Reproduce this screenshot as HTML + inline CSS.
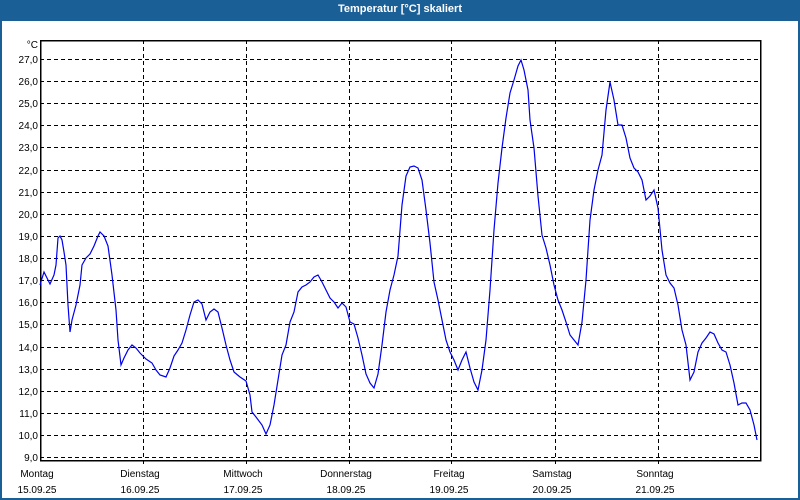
<!DOCTYPE html>
<html><head><meta charset="utf-8"><style>
html,body{margin:0;padding:0;}
body{width:800px;height:500px;overflow:hidden;background:#1b5f97;position:relative;font-family:"Liberation Sans",sans-serif;}
.title{position:absolute;left:0;top:0;width:800px;height:21px;line-height:19px;text-align:center;color:#fff;font-weight:bold;font-size:11px;}
.win{position:absolute;left:2px;top:21px;width:796px;height:477px;background:#fff;}
svg{position:absolute;left:0;top:0;}
text{font-family:"Liberation Sans",sans-serif;font-size:10px;fill:#000;}
</style></head><body>
<div class="title">Temperatur [°C] skaliert</div>
<div class="win"></div>
<svg width="800" height="500">
<g stroke="#000" stroke-width="1" stroke-dasharray="4,3" shape-rendering="crispEdges">
<line x1="40" y1="59.5" x2="760" y2="59.5"/>
<line x1="40" y1="81.5" x2="760" y2="81.5"/>
<line x1="40" y1="103.5" x2="760" y2="103.5"/>
<line x1="40" y1="125.5" x2="760" y2="125.5"/>
<line x1="40" y1="147.5" x2="760" y2="147.5"/>
<line x1="40" y1="170.5" x2="760" y2="170.5"/>
<line x1="40" y1="192.5" x2="760" y2="192.5"/>
<line x1="40" y1="214.5" x2="760" y2="214.5"/>
<line x1="40" y1="236.5" x2="760" y2="236.5"/>
<line x1="40" y1="258.5" x2="760" y2="258.5"/>
<line x1="40" y1="280.5" x2="760" y2="280.5"/>
<line x1="40" y1="302.5" x2="760" y2="302.5"/>
<line x1="40" y1="324.5" x2="760" y2="324.5"/>
<line x1="40" y1="347.5" x2="760" y2="347.5"/>
<line x1="40" y1="369.5" x2="760" y2="369.5"/>
<line x1="40" y1="391.5" x2="760" y2="391.5"/>
<line x1="40" y1="413.5" x2="760" y2="413.5"/>
<line x1="40" y1="435.5" x2="760" y2="435.5"/>
<line x1="40" y1="457.5" x2="760" y2="457.5"/>
<line x1="143.5" y1="40" x2="143.5" y2="465"/>
<line x1="246.5" y1="40" x2="246.5" y2="465"/>
<line x1="349.5" y1="40" x2="349.5" y2="465"/>
<line x1="451.5" y1="40" x2="451.5" y2="465"/>
<line x1="555.5" y1="40" x2="555.5" y2="465"/>
<line x1="658.5" y1="40" x2="658.5" y2="465"/>
</g>
<rect x="40.5" y="40.5" width="720" height="420" fill="none" stroke="#000" stroke-width="1.5" shape-rendering="crispEdges"/>
<g text-anchor="end">
<text x="38" y="48">°C</text>
<text x="38" y="63">27,0</text><text x="38" y="85">26,0</text><text x="38" y="107">25,0</text>
<text x="38" y="129">24,0</text><text x="38" y="151">23,0</text><text x="38" y="174">22,0</text>
<text x="38" y="196">21,0</text><text x="38" y="218">20,0</text><text x="38" y="240">19,0</text>
<text x="38" y="262">18,0</text><text x="38" y="284">17,0</text><text x="38" y="306">16,0</text>
<text x="38" y="328">15,0</text><text x="38" y="351">14,0</text><text x="38" y="373">13,0</text>
<text x="38" y="395">12,0</text><text x="38" y="417">11,0</text><text x="38" y="439">10,0</text>
<text x="38" y="461">9,0</text>
</g>
<g text-anchor="middle">
<text x="37" y="477">Montag</text><text x="37" y="493">15.09.25</text>
<text x="140" y="477">Dienstag</text><text x="140" y="493">16.09.25</text>
<text x="243" y="477">Mittwoch</text><text x="243" y="493">17.09.25</text>
<text x="346" y="477">Donnerstag</text><text x="346" y="493">18.09.25</text>
<text x="449" y="477">Freitag</text><text x="449" y="493">19.09.25</text>
<text x="552" y="477">Samstag</text><text x="552" y="493">20.09.25</text>
<text x="655" y="477">Sonntag</text><text x="655" y="493">21.09.25</text>
</g>
<polyline fill="none" stroke="#0000ee" stroke-width="1.2" points="40,285 44,272 48,280 50,284 54,275 56,265 58,238 60,236 62,240 64,252 66,265 68,305 70,332 72,320 76,305 80,285 82,265 86,258 90,254 94,246 98,236 100,232 104,236 108,246 112,275 116,310 118,340 121,365 124,358 128,350 132,345 136,348 140,353 146,359 152,363 156,370 160,375 166,377 170,368 174,356 178,350 182,343 186,330 190,315 194,302 198,300 202,304 206,320 210,312 214,309 218,312 222,328 226,345 230,360 234,372 240,377 246,381 250,395 252,412 256,417 262,425 266,434 270,425 274,405 278,380 282,355 286,345 290,322 294,312 298,292 302,287 306,285 310,282 314,277 318,275 322,282 326,290 330,298 334,302 338,308 342,303 346,307 350,322 354,324 358,338 362,355 366,374 370,383 374,388 378,374 382,345 386,312 390,290 394,275 398,256 402,205 406,176 410,167 414,166 418,168 422,180 426,210 430,243 434,282 438,300 442,320 446,340 450,352 454,360 458,370 462,360 466,352 470,368 474,382 478,390 482,370 486,340 490,290 494,230 498,183 502,148 506,118 510,93 514,80 518,66 521,60 524,70 528,90 530,120 534,148 538,196 542,235 546,248 550,265 554,285 558,300 562,310 566,322 570,335 574,340 578,345 582,322 586,280 590,220 594,190 598,170 602,155 606,110 610,82 614,100 618,125 622,125 626,138 630,158 634,168 638,172 642,180 646,200 650,196 654,190 658,208 662,250 666,275 670,283 674,288 678,305 682,330 686,345 690,380 694,372 698,352 702,343 706,338 710,332 714,334 718,343 722,350 726,352 730,365 734,383 738,405 742,403 746,403 750,410 754,425 757,440"/>
</svg>
</body></html>
